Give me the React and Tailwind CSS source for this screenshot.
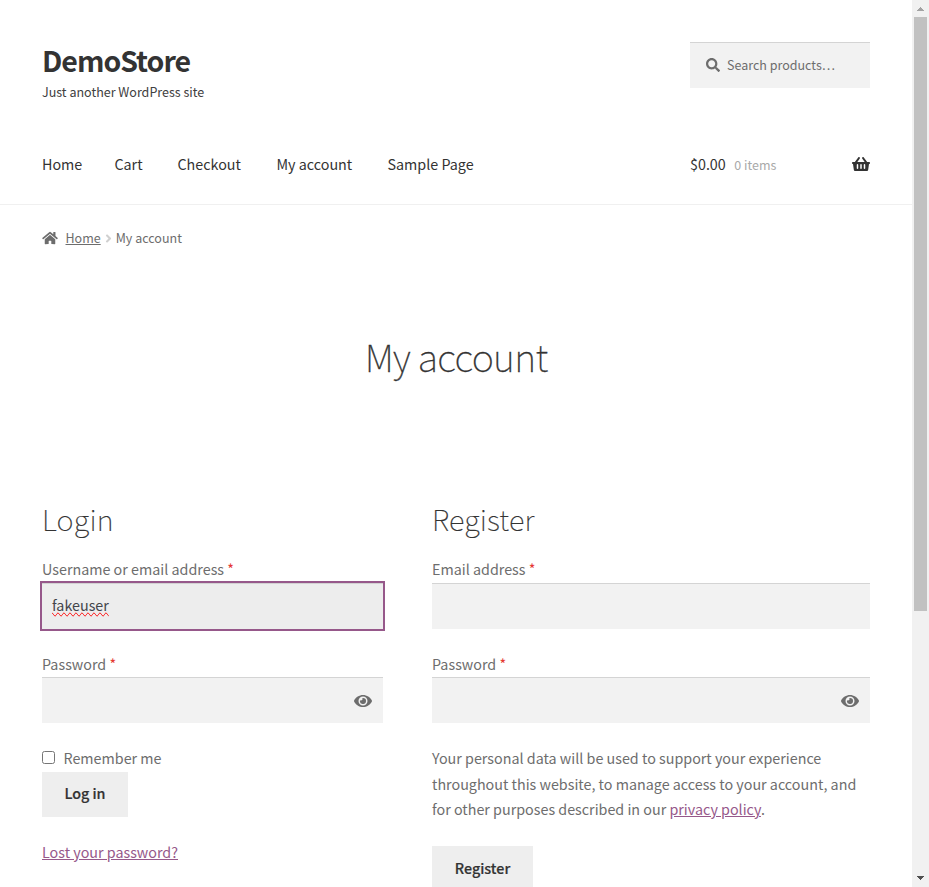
import React from "react";
import { FaSearch, FaHome, FaShoppingBasket, FaAngleRight, FaEye } from "react-icons/fa";

const NAV = [
  { label: "Home", cls: "w-[72.4px]" },
  { label: "Cart", cls: "w-[63.1px]" },
  { label: "Checkout", cls: "w-[99px]" },
  { label: "My account", cls: "w-[111px]" },
  { label: "Sample Page", cls: "" },
];

function Label({ children }) {
  return (
    <label className="block h-[26px] leading-[25px] whitespace-nowrap">
      {children} <span className="text-[#e53935]">*</span>
    </label>
  );
}

function Field({ eye }) {
  return (
    <div className="flex h-[46px] items-center justify-end border-t border-[#d4d4d4] bg-[#f2f2f2] pr-[11px]">
      {eye && <FaEye className="h-4 w-[18px] text-[#6d6d6d]" />}
    </div>
  );
}

function Header() {
  return (
    <header className="h-[205px] border-b border-[#f0f0f0] px-[42px] text-[#333]">
      <div className="flex justify-between pt-[42px]">
        <div>
          <h1 className="h-[38px] text-[28.5px] leading-[36px] font-bold tracking-[-1px]">DemoStore</h1>
          <p className="h-6 text-[12.53px] leading-[23px] text-[#404040]">Just another WordPress site</p>
        </div>
        <div className="flex h-[46px] w-[180px] items-center border-t border-[#d4d4d4] bg-[#f2f2f2] pl-4 text-[12.5px] text-[#6d6d6d]">
          <FaSearch className="mb-[2px] h-[14px] w-[14px]" />
          <span className="pl-[7px]">Search products…</span>
        </div>
      </div>
      <div className="flex justify-between pt-[47px]">
        <nav className="flex leading-[26px]">
          {NAV.map((n) => (
            <a key={n.label} className={n.cls + " whitespace-nowrap"}>{n.label}</a>
          ))}
        </nav>
        <div className="flex w-[180px] items-center leading-[26px]">
          <span>$0.00</span>
          <span className="pt-[2px] pl-[8.5px] text-[12.5px] leading-[24px] text-[#a9a9a9]">0 items</span>
          <FaShoppingBasket className="ml-auto h-4 w-[18px]" />
        </div>
      </div>
    </header>
  );
}

function Login() {
  return (
    <section className="w-[341px]">
      <h2 className="h-[51px] text-[29px] leading-[26px] font-thin tracking-[0.2px] text-[#333] [-webkit-text-stroke:0.2px_#333]">Login</h2>
      <Label>Username or email address</Label>
      <div className="mt-px h-[46px] border-t border-[#d2d2d2] bg-[#ededed] pl-[10px] leading-[42px] text-[#43454b] outline-2 outline-[#96588a]">
        <span className="[text-decoration-line:spelling-error]">fakeuser</span>
      </div>
      <div className="pt-[22px]">
        <Label>Password</Label>
        <Field eye />
      </div>
      <div className="mt-[22px] flex h-[27px] items-start">
        <span className="mt-[6px] h-[13px] w-[13px] rounded-[2.5px] border border-[#767676] bg-white" />
        <span className="pl-[8.5px] leading-[26px]">Remember me</span>
      </div>
      <button className="block h-[45px] w-[86px] bg-[#eeeeee] pb-[3px] font-medium text-[#333] [-webkit-text-stroke:0.2px_#333]">Log in</button>
      <a className="mt-[22px] block leading-[26px] text-[#96588a] underline">Lost your password?</a>
    </section>
  );
}

function Register() {
  return (
    <section className="w-[438px]">
      <h2 className="h-[51px] text-[29px] leading-[26px] font-thin tracking-[0.2px] text-[#333] [-webkit-text-stroke:0.2px_#333]">Register</h2>
      <Label>Email address</Label>
      <div className="pt-px">
        <Field />
      </div>
      <div className="pt-[22px]">
        <Label>Password</Label>
        <Field eye />
      </div>
      <p className="mt-[22px] leading-[25.6px] whitespace-nowrap">
        Your personal data will be used to support your experience<br />
        throughout this website, to manage access to your account, and<br />
        for other purposes described in our <a className="text-[#96588a] underline">privacy policy</a>.
      </p>
      <button className="mt-6 block h-[45px] w-[101px] bg-[#eeeeee] pb-[2px] font-medium text-[#333] [-webkit-text-stroke:0.2px_#333]">Register</button>
    </section>
  );
}

function Scrollbar() {
  return (
    <div className="flex h-full w-[17px] flex-col items-center bg-[#f1f1f1]">
      <svg className="h-[17px] w-[17px]" viewBox="0 0 17 17" shapeRendering="crispEdges">
        <path d="M5 11h7v-1h-1v-1h-1v-1h-1v-1h-1v1h-1v1h-1v1h-1z" fill="#a3a3a3" />
      </svg>
      <div className="h-[594px] w-[13px] bg-[#c1c1c1]" />
      <svg className="mt-auto h-[17px] w-[17px]" viewBox="0 0 17 17" shapeRendering="crispEdges">
        <path d="M5 6h7v1h-1v1h-1v1h-1v1h-1v-1h-1v-1h-1v-1h-1z" fill="#505050" />
      </svg>
    </div>
  );
}

export default function App() {
  return (
    <div className="flex h-[887px] w-[929px] overflow-hidden bg-white font-['Noto_Sans_CJK_SC',sans-serif] text-[14.32px] text-[#6d6d6d]">
      <div className="w-[912px]">
        <Header />
        <div className="flex h-[66px] items-center px-[42px] text-[12.5px]">
          <FaHome className="h-[14px] w-4" />
          <a className="pl-[7.5px] underline">Home</a>
          <FaAngleRight className="mx-[3px] h-[13px] w-[9px] text-[#d0d0d0]" />
          <span>My account</span>
        </div>
        <h1 className="h-[234px] pt-[57px] text-center text-[37.8px] leading-[56px] font-thin tracking-[-0.7px] text-[#333] [-webkit-text-stroke:0.3px_#333]">My account</h1>
        <div className="flex justify-between pr-[42px] pl-[42px]">
          <Login />
          <Register />
        </div>
      </div>
      <Scrollbar />
    </div>
  );
}
